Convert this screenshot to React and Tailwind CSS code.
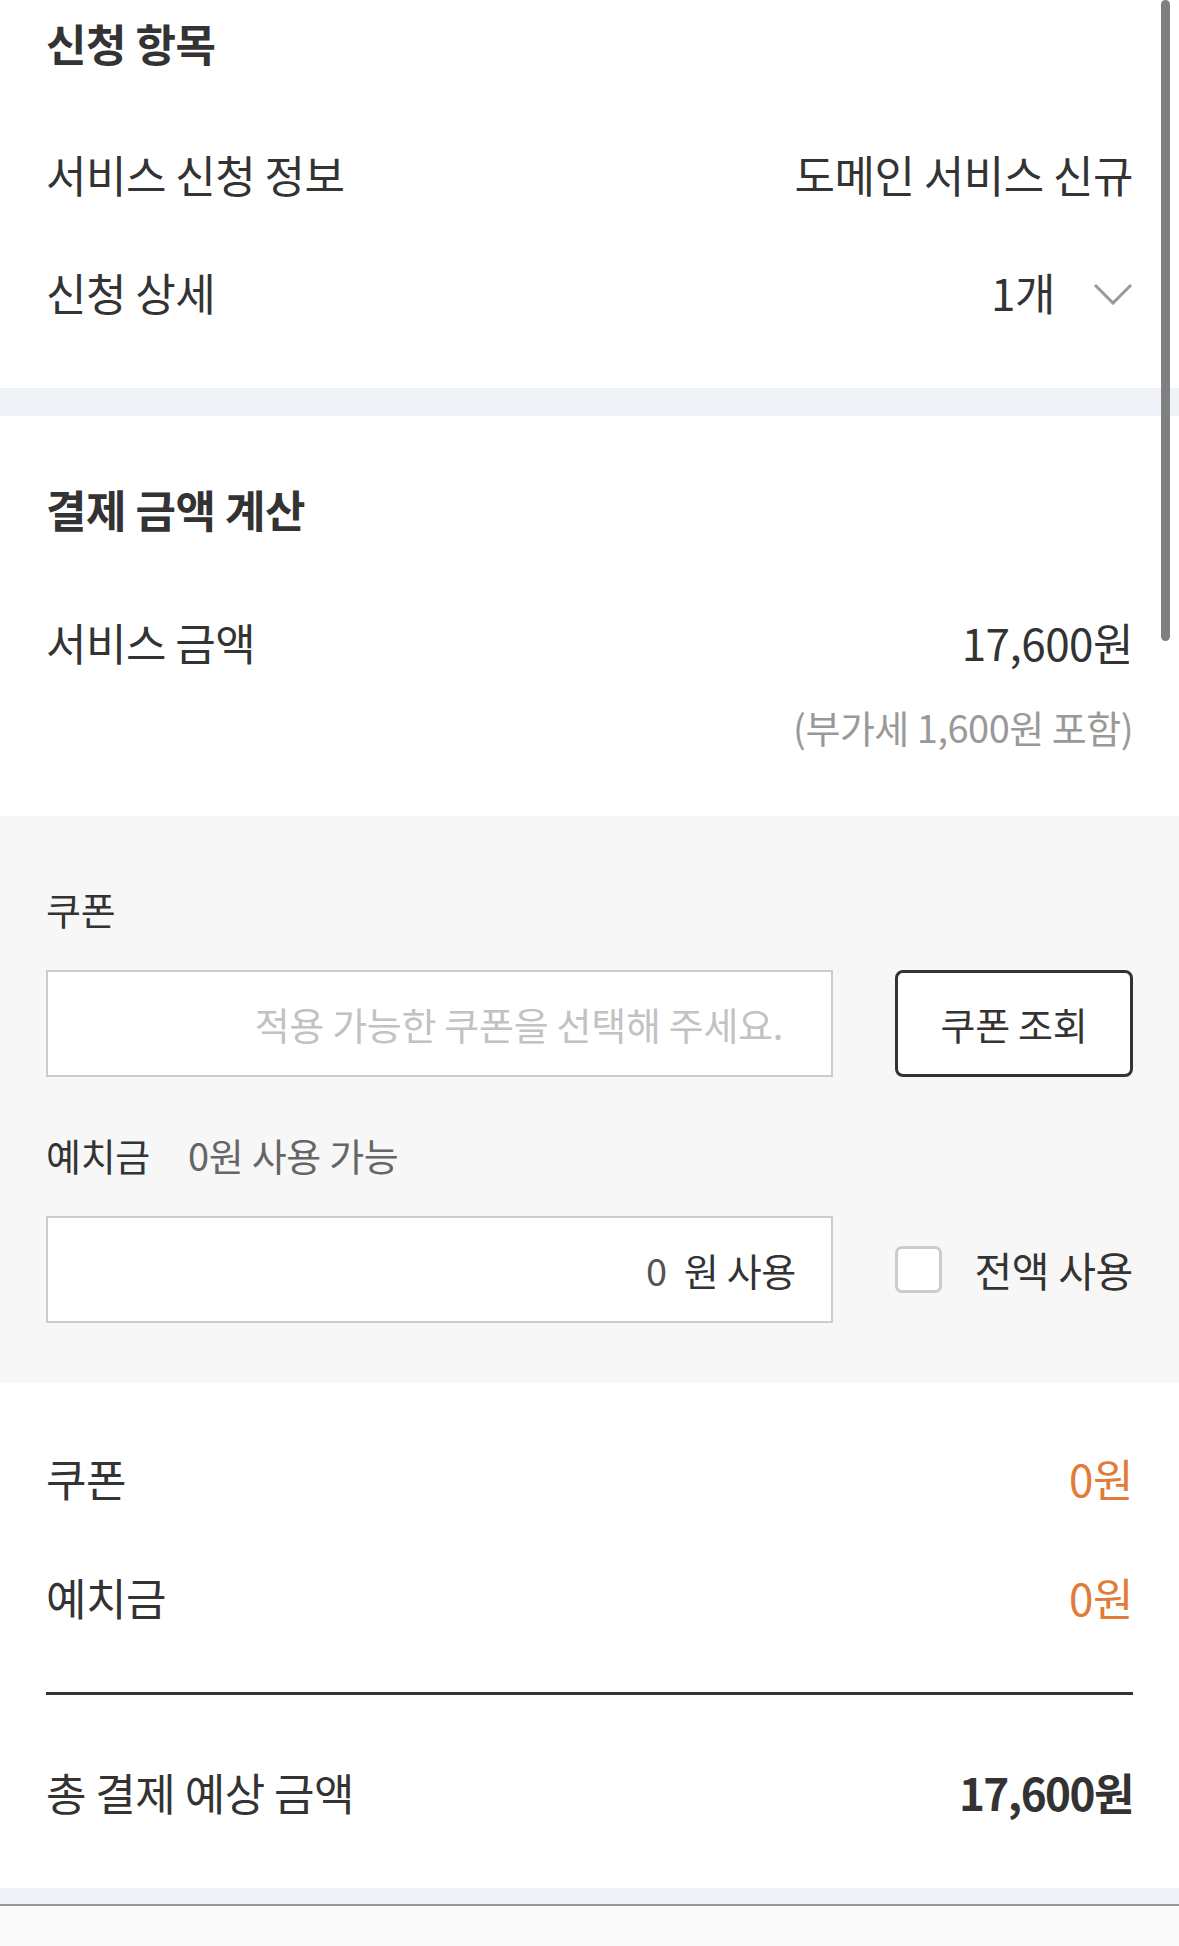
import React from "react";

const font = { fontFamily: '"Noto Sans CJK KR", "Noto Sans", sans-serif' };

function Row({ label, children, className = "" }) {
  return (
    <div className={`flex h-[86px] items-center justify-between ${className}`}>
      <span>{label}</span>
      <div className="flex items-center">{children}</div>
    </div>
  );
}

export default function App() {
  return (
    <div
      style={font}
      className="relative min-h-[1946px] bg-[#fafafa] text-[#333] text-[44px] tracking-[-0.5px]"
    >
      {/* 스크롤 인디케이터 */}
      <div className="absolute right-[9px] top-0 h-[641px] w-[9px] rounded-full bg-[#808080]" />

      {/* 신청 항목 */}
      <section className="bg-white px-[46px] pb-[53px]">
        <h2 className="flex h-[86px] items-center font-bold tracking-[-0.5px]">신청 항목</h2>
        <Row label="서비스 신청 정보" className="mt-[45px]">
          도메인 서비스 신규
        </Row>
        <Row label="신청 상세" className="mt-[32px]">
          <span>1개</span>
          <svg width="40" height="22" viewBox="0 0 40 22" className="ml-[38px] mt-[4px]">
            <polyline points="2,2 20,20 38,2" fill="none" stroke="#999" strokeWidth="3" />
          </svg>
        </Row>
      </section>

      <div className="h-[28px] bg-[#eff2f7]" />

      {/* 결제 금액 계산 */}
      <section className="bg-white px-[46px] pb-[65px] pt-[50px]">
        <h2 className="flex h-[86px] items-center font-bold tracking-[-0.5px]">결제 금액 계산</h2>
        <Row label="서비스 금액" className="mt-[47px]">
          17,600원
        </Row>
        <div className="mt-[16px] flex h-[50px] items-center justify-end text-[38px] tracking-[-0.5px] text-[#999]">
          (부가세 1,600원 포함)
        </div>
      </section>

      {/* 쿠폰 / 예치금 입력 */}
      <section className="bg-[#f7f7f7] px-[46px] pb-[60px] pt-[67px] text-[38px] tracking-[-0.3px]">
        <div className="flex h-[50px] items-center">쿠폰</div>
        <div className="mt-[37px] flex items-center gap-[62px]">
          <div className="flex h-[107px] flex-1 items-center justify-end border-2 border-[#cccccc] bg-white pr-[48px] text-[#c2c2c2]">
            적용 가능한 쿠폰을 선택해 주세요.
          </div>
          <button className="flex h-[107px] w-[238px] items-center justify-center rounded-[8px] border-[3px] border-[#333] bg-white text-[#333]">
            쿠폰 조회
          </button>
        </div>

        <div className="mt-[52px] flex h-[50px] items-center">
          <span>예치금</span>
          <span className="ml-[38px] text-[#666]">0원 사용 가능</span>
        </div>
        <div className="mt-[37px] flex items-center gap-[62px]">
          <div className="flex h-[107px] flex-1 items-center justify-end border-2 border-[#cccccc] bg-white pr-[35px]">
            <input
              readOnly
              value="0"
              className="w-[200px] bg-transparent text-right text-[#555] outline-none"
            />
            <span className="ml-[17px]">원 사용</span>
          </div>
          <label className="flex w-[238px] items-center justify-between">
            <span className="h-[47px] w-[47px] rounded-[7px] border-[3px] border-[#cccccc] bg-white" />
            <span className="text-[41px]">전액 사용</span>
          </label>
        </div>
      </section>

      {/* 결제 요약 */}
      <section className="bg-white px-[46px] pb-[53px] pt-[52px]">
        <Row label="쿠폰">
          <span className="text-[#e07b39]">0원</span>
        </Row>
        <Row label="예치금" className="mt-[33px]">
          <span className="text-[#e07b39]">0원</span>
        </Row>
        <div className="mt-[52px] h-[3px] bg-[#333]" />
        <Row label="총 결제 예상 금액" className="mt-[54px]">
          <span className="font-bold tracking-[-1.5px]">17,600원</span>
        </Row>
      </section>

      <div className="h-[18px] border-b-2 border-[#999] bg-[#eff2f7]" />
    </div>
  );
}
